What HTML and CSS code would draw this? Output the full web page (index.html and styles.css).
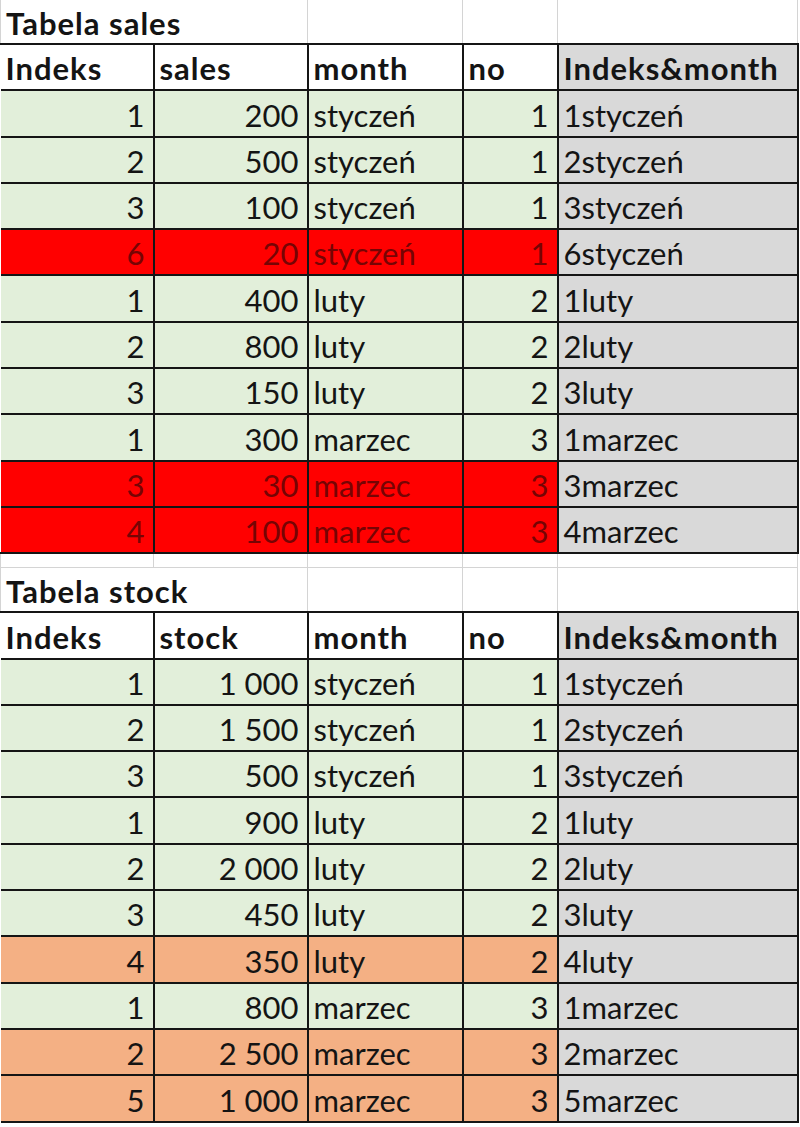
FILE: index.html
```html
<!DOCTYPE html>
<html lang="pl">
<head>
<meta charset="utf-8">
<title>Tabela sales / stock</title>
<link rel="stylesheet" href="styles.css">
</head>
<body>
<table class="sheet">
  <colgroup>
    <col class="c1"><col class="c2"><col class="c3"><col class="c4"><col class="c5">
  </colgroup>
  <tbody>
    <tr class="title first"><td colspan="2">Tabela sales</td><td></td><td></td><td></td></tr>
    <tr class="head"><th>Indeks</th><th>sales</th><th>month</th><th>no</th><th class="key">Indeks&amp;month</th></tr>
    <tr class="g"><td class="n">1</td><td class="n">200</td><td>styczeń</td><td class="n">1</td><td class="key">1styczeń</td></tr>
    <tr class="g"><td class="n">2</td><td class="n">500</td><td>styczeń</td><td class="n">1</td><td class="key">2styczeń</td></tr>
    <tr class="g"><td class="n">3</td><td class="n">100</td><td>styczeń</td><td class="n">1</td><td class="key">3styczeń</td></tr>
    <tr class="r"><td class="n">6</td><td class="n">20</td><td>styczeń</td><td class="n">1</td><td class="key">6styczeń</td></tr>
    <tr class="g"><td class="n">1</td><td class="n">400</td><td>luty</td><td class="n">2</td><td class="key">1luty</td></tr>
    <tr class="g"><td class="n">2</td><td class="n">800</td><td>luty</td><td class="n">2</td><td class="key">2luty</td></tr>
    <tr class="g"><td class="n">3</td><td class="n">150</td><td>luty</td><td class="n">2</td><td class="key">3luty</td></tr>
    <tr class="g"><td class="n">1</td><td class="n">300</td><td>marzec</td><td class="n">3</td><td class="key">1marzec</td></tr>
    <tr class="r"><td class="n">3</td><td class="n">30</td><td>marzec</td><td class="n">3</td><td class="key">3marzec</td></tr>
    <tr class="r"><td class="n">4</td><td class="n">100</td><td>marzec</td><td class="n">3</td><td class="key">4marzec</td></tr>
    <tr class="spacer"><td></td><td></td><td></td><td></td><td></td></tr>
    <tr class="title"><td colspan="2">Tabela stock</td><td></td><td></td><td></td></tr>
    <tr class="head"><th>Indeks</th><th>stock</th><th>month</th><th>no</th><th class="key">Indeks&amp;month</th></tr>
    <tr class="g"><td class="n">1</td><td class="n">1 000</td><td>styczeń</td><td class="n">1</td><td class="key">1styczeń</td></tr>
    <tr class="g"><td class="n">2</td><td class="n">1 500</td><td>styczeń</td><td class="n">1</td><td class="key">2styczeń</td></tr>
    <tr class="g"><td class="n">3</td><td class="n">500</td><td>styczeń</td><td class="n">1</td><td class="key">3styczeń</td></tr>
    <tr class="g"><td class="n">1</td><td class="n">900</td><td>luty</td><td class="n">2</td><td class="key">1luty</td></tr>
    <tr class="g"><td class="n">2</td><td class="n">2 000</td><td>luty</td><td class="n">2</td><td class="key">2luty</td></tr>
    <tr class="g"><td class="n">3</td><td class="n">450</td><td>luty</td><td class="n">2</td><td class="key">3luty</td></tr>
    <tr class="o"><td class="n">4</td><td class="n">350</td><td>luty</td><td class="n">2</td><td class="key">4luty</td></tr>
    <tr class="g"><td class="n">1</td><td class="n">800</td><td>marzec</td><td class="n">3</td><td class="key">1marzec</td></tr>
    <tr class="o"><td class="n">2</td><td class="n">2 500</td><td>marzec</td><td class="n">3</td><td class="key">2marzec</td></tr>
    <tr class="o"><td class="n">5</td><td class="n">1 000</td><td>marzec</td><td class="n">3</td><td class="key">5marzec</td></tr>
  </tbody>
</table>
</body>
</html>
```

FILE: styles.css
```css
html, body {
  margin: 0;
  padding: 0;
  background: #ffffff;
}

body {
  font-family: Lato, "Open Sans", "Liberation Sans", sans-serif;
  color: #141414;
  overflow: hidden;
}

.sheet {
  border-collapse: collapse;
  table-layout: fixed;
  width: 797px;
  font-size: 31px;
}

.c1 { width: 153px; }
.c2 { width: 154px; }
.c3 { width: 155px; }
.c4 { width: 95px; }
.c5 { width: 240px; }

.sheet td,
.sheet th {
  padding: 0 5px 3px 5px;
  border: 2px solid #151515;
  text-align: left;
  vertical-align: bottom;
  line-height: 36px;
  white-space: nowrap;
  overflow: visible;
}

.sheet tr > :first-child {
  border-left: none;
}

.sheet tr.g td,
.sheet tr.r td,
.sheet tr.o td,
.sheet tr.head th {
  height: 41.3px;
}

.sheet th,
.sheet tr.title td {
  font-weight: 700;
  letter-spacing: 1px;
}

.sheet th {
  background: #ffffff;
}

.sheet .n {
  text-align: right;
  padding-right: 8px;
}

.g td { background: #e2efda; }
.r td { background: #ff0000; color: #760404; }
.o td { background: #f4b084; }
.sheet .key { background: #d9d9d9; color: #141414; }

/* gridline-only rows */
.sheet tr.title td,
.sheet tr.spacer td {
  background: #ffffff;
  border: 1px solid #d4d4d4;
}

.sheet tr.title td {
  height: 41px;
  padding-bottom: 2px;
}

.sheet tr.first td {
  border-top: none;
  height: 41px;
}

.sheet tr.spacer td {
  height: 13px;
  padding: 0;
  line-height: 0;
}
```
